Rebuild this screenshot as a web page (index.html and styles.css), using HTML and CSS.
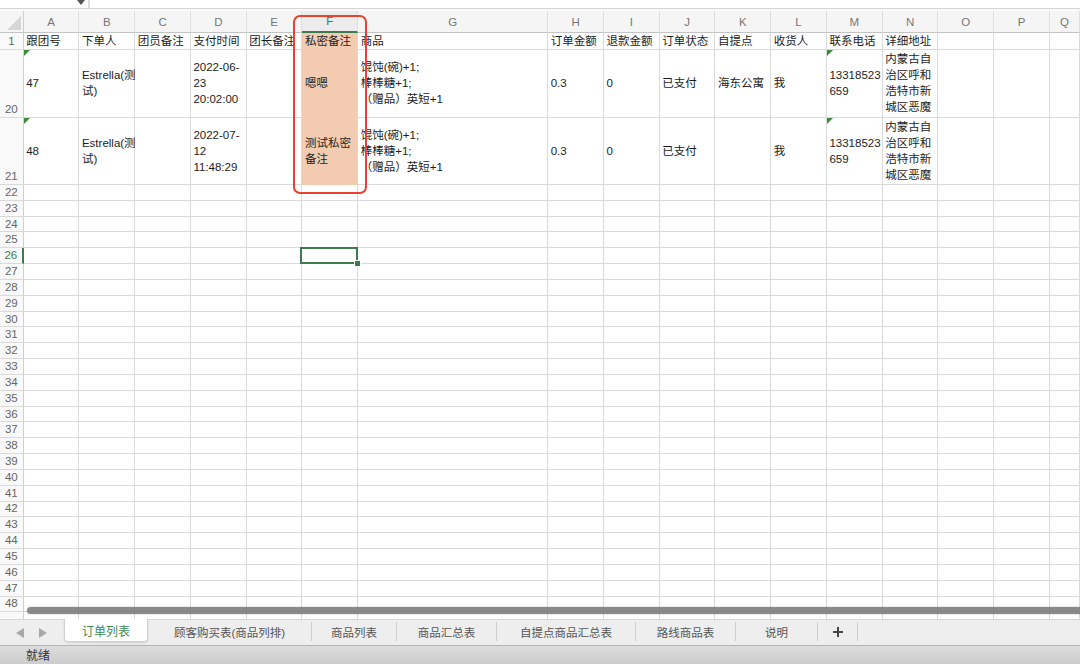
FILE: index.html
```html
<!DOCTYPE html>
<html lang="zh-CN">
  <head>
    <meta charset="UTF-8" />
    <meta name="viewport" content="width=device-width, initial-scale=1.0" />
    <title>订单列表</title>
    <link rel="stylesheet" href="styles.css">
  </head>
  <body>
    <!-- formula bar -->
    <div class="formula-bar">
      <div class="name-box">
        <svg class="caret" width="8" height="6" viewBox="0 0 8 6"><path d="M0 0 L8 0 L4 5 Z" fill="#555"/></svg>
      </div>
      <div class="formula-input"></div>
    </div>

    <!-- sheet -->
    <div class="sheet">
      <div class="grid" id="grid">
        <div class="row head-row">
          <div class="corner"><span class="corner-tri"></span></div>
          <div class="col-head">A</div>
          <div class="col-head">B</div>
          <div class="col-head">C</div>
          <div class="col-head">D</div>
          <div class="col-head">E</div>
          <div class="col-head active">F</div>
          <div class="col-head">G</div>
          <div class="col-head">H</div>
          <div class="col-head">I</div>
          <div class="col-head">J</div>
          <div class="col-head">K</div>
          <div class="col-head">L</div>
          <div class="col-head">M</div>
          <div class="col-head">N</div>
          <div class="col-head">O</div>
          <div class="col-head">P</div>
          <div class="col-head">Q</div>
        </div>

        <div class="row row-title">
          <div class="row-head">1</div>
          <div class="cell">跟团号</div>
          <div class="cell">下单人</div>
          <div class="cell">团员备注</div>
          <div class="cell">支付时间</div>
          <div class="cell">团长备注</div>
          <div class="cell fill">私密备注</div>
          <div class="cell">商品</div>
          <div class="cell">订单金额</div>
          <div class="cell">退款金额</div>
          <div class="cell">订单状态</div>
          <div class="cell">自提点</div>
          <div class="cell">收货人</div>
          <div class="cell">联系电话</div>
          <div class="cell">详细地址</div>
          <div class="cell"></div>
          <div class="cell"></div>
          <div class="cell"></div>
        </div>

        <div class="row row-tall">
          <div class="row-head">20</div>
          <div class="cell note">47</div>
          <div class="cell spill">Estrella(测<br>试)</div>
          <div class="cell"></div>
          <div class="cell">2022-06-<br>23<br>20:02:00</div>
          <div class="cell"></div>
          <div class="cell fill">嗯嗯</div>
          <div class="cell">馄饨(碗)+1;<br>棒棒糖+1;<br>（赠品）英短+1</div>
          <div class="cell">0.3</div>
          <div class="cell">0</div>
          <div class="cell">已支付</div>
          <div class="cell">海东公寓</div>
          <div class="cell">我</div>
          <div class="cell note">13318523<br>659</div>
          <div class="cell">内蒙古自<br>治区呼和<br>浩特市新<br>城区恶魔</div>
          <div class="cell"></div>
          <div class="cell"></div>
          <div class="cell"></div>
        </div>

        <div class="row row-tall">
          <div class="row-head">21</div>
          <div class="cell note">48</div>
          <div class="cell spill">Estrella(测<br>试)</div>
          <div class="cell"></div>
          <div class="cell">2022-07-<br>12<br>11:48:29</div>
          <div class="cell"></div>
          <div class="cell fill">测试私密<br>备注</div>
          <div class="cell">馄饨(碗)+1;<br>棒棒糖+1;<br>（赠品）英短+1</div>
          <div class="cell">0.3</div>
          <div class="cell">0</div>
          <div class="cell">已支付</div>
          <div class="cell"></div>
          <div class="cell">我</div>
          <div class="cell note">13318523<br>659</div>
          <div class="cell">内蒙古自<br>治区呼和<br>浩特市新<br>城区恶魔</div>
          <div class="cell"></div>
          <div class="cell"></div>
          <div class="cell"></div>
        </div>
      </div>

      <div class="scrollbar"></div>
      <div class="callout"></div>
    </div>

    <!-- sheet tabs -->
    <div class="tabs">
      <div class="tab-nav">
        <svg width="8" height="10" viewBox="0 0 8 10"><path d="M8 0 L8 10 L0 5 Z" fill="#a8a8a8"/></svg>
        <svg width="8" height="10" viewBox="0 0 8 10"><path d="M0 0 L0 10 L8 5 Z" fill="#a8a8a8"/></svg>
      </div>
      <div class="tab current">订单列表</div>
      <div class="tab w164">顾客购买表(商品列排)</div>
      <div class="tab w85">商品列表</div>
      <div class="tab w100">商品汇总表</div>
      <div class="tab w139">自提点商品汇总表</div>
      <div class="tab w100">路线商品表</div>
      <div class="tab w82">说明</div>
      <div class="tab add">
        <svg width="12" height="12" viewBox="0 0 12 12"><path d="M6 1 V11 M1 6 H11" stroke="#444" stroke-width="2"/></svg>
      </div>
    </div>

    <!-- status bar -->
    <div class="status">就绪</div>

    <script>
      // empty rows 22..48 (49 sits under the scrollbar)
      var grid = document.getElementById("grid");
      for (var r = 22; r <= 49; r++) {
        var row = document.createElement("div");
        row.className = "row row-empty";
        var head = document.createElement("div");
        head.className = "row-head";
        if (r == 26) head.className += " active";
        if (r < 49) head.textContent = r;
        row.appendChild(head);
        for (var c = 0; c < 17; c++) {
          var cell = document.createElement("div");
          cell.className = "cell";
          if (r == 26 && c == 5) cell.className += " selected";
          row.appendChild(cell);
        }
        grid.appendChild(row);
      }
    </script>
  </body>
</html>
```

FILE: styles.css
```css
body {
  margin: 0;
  width: 1080px;
  height: 664px;
  overflow: hidden;
  background: #fff;
  font-family: "Liberation Sans", "Noto Sans CJK SC", sans-serif;
  color: #1d1d1d;
  --cols: 23.7px repeat(6, 55.75px) 190px repeat(9, 55.75px) 1fr;
}

/* formula bar */
.formula-bar {
  height: 8px;
  display: flex;
  border-bottom: 1px solid #d4d4d4;
}
.name-box {
  width: 88px;
  border-right: 2px solid #dcdcdc;
  position: relative;
}
.caret {
  position: absolute;
  left: 77px;
  top: 0;
}
.formula-input {
  flex: 1;
}

/* sheet */
.sheet {
  position: relative;
  height: 610px;
  overflow: hidden;
  padding-top: 2px;
  box-sizing: border-box;
  background: #fafafa;
}
.grid {
  background: #fff;
}
.row {
  display: grid;
  grid-template-columns: var(--cols);
  font-size: 11.5px;
  line-height: 16px;
}
.head-row {
  height: 22px;
  background: #f5f5f5;
}
.row-title {
  height: 17px;
}
.row-tall {
  height: 67.5px;
}
.row-empty {
  height: 15.83px;
}

.corner {
  position: relative;
  border-right: 1px solid #cfcfcf;
  border-bottom: 1px solid #c4c4c4;
}
.corner-tri {
  position: absolute;
  right: 2px;
  bottom: 2px;
  width: 0;
  height: 0;
  border-left: 14px solid transparent;
  border-bottom: 14px solid #d6d6d6;
}
.col-head {
  display: flex;
  align-items: center;
  justify-content: center;
  color: #777;
  border-right: 1px solid #dedede;
  border-bottom: 1px solid #c4c4c4;
  box-sizing: border-box;
}
.col-head.active {
  color: #3d7a4e;
  background: #ececec;
  border-bottom: 2px solid #3d7a4e;
}

.row-head {
  display: flex;
  align-items: flex-end;
  justify-content: center;
  color: #666;
  background: #f9f9f9;
  border-right: 1px solid #cfcfcf;
  border-bottom: 1px solid #dadada;
  box-sizing: border-box;
  line-height: 15px;
  overflow: hidden;
}
.row-title .row-head,
.row-empty .row-head {
  align-items: center;
}
.row-head.active {
  color: #3d7a4e;
  border-right: 2px solid #3d7a4e;
}

.cell {
  position: relative;
  display: flex;
  align-items: center;
  padding-left: 2.5px;
  border-right: 1px solid #dadada;
  border-bottom: 1px solid #dadada;
  box-sizing: border-box;
  white-space: nowrap;
  overflow: hidden;
}
.cell.spill {
  overflow: visible;
  z-index: 1;
}
.cell.fill {
  background: #f3cbb0;
  border-bottom-color: #f3cbb0;
}
.cell.note::before {
  content: "";
  position: absolute;
  left: 0;
  top: 0;
  border-top: 6px solid #3d8a3a;
  border-right: 6px solid transparent;
}
.cell.selected {
  overflow: visible;
}
.cell.selected::after {
  content: "";
  position: absolute;
  left: -2px;
  top: -1px;
  right: -1px;
  bottom: -1px;
  border: 2px solid #3d7a4e;
}
.cell.selected::before {
  content: "";
  position: absolute;
  right: -4px;
  bottom: -4px;
  width: 5px;
  height: 5px;
  background: #3d7a4e;
  border: 1px solid #fff;
  z-index: 2;
}

/* overlays */
.scrollbar {
  position: absolute;
  left: 27px;
  right: -6px;
  top: 598px;
  height: 7px;
  border-radius: 4px;
  background: rgba(112, 112, 112, 0.82);
  box-shadow: 0 0 2px rgba(0, 0, 0, 0.25);
}
.callout {
  position: absolute;
  left: 293px;
  top: 6px;
  width: 74px;
  height: 179px;
  border: 2.5px solid #e8412e;
  border-radius: 7px;
  box-sizing: border-box;
}

/* sheet tabs */
.tabs {
  height: 27px;
  display: flex;
  background: #eeeeee;
  border-top: 1px solid #d6d6d6;
  border-bottom: 1px solid #b4b4b4;
  box-sizing: border-box;
  font-size: 11.5px;
  color: #555;
}
.tab-nav {
  width: 64px;
  display: flex;
  align-items: center;
  gap: 15px;
  padding-left: 16px;
  box-sizing: border-box;
}
.tab {
  display: flex;
  align-items: center;
  justify-content: center;
  margin: 2px 0 4px;
  border-right: 1px solid #cdcdcd;
  box-sizing: border-box;
}
.tab.current {
  width: 84px;
  margin: -1px 0 3px;
  background: #fff;
  color: #3d8a56;
  font-size: 12px;
  border: 1px solid #d0d0d0;
  border-top: none;
  border-radius: 0 0 4px 4px;
  box-shadow: 0 1px 2px rgba(0, 0, 0, 0.12);
}
.w164 { width: 164px; }
.w85 { width: 85px; }
.w100 { width: 100px; }
.w139 { width: 139px; }
.w82 { width: 82px; }
.tab.add {
  width: 40px;
}

/* status bar */
.status {
  height: 18px;
  padding-left: 26px;
  font-size: 12px;
  line-height: 20px;
  color: #333;
  background: linear-gradient(#dcdcdc, #cccccc);
}
```
